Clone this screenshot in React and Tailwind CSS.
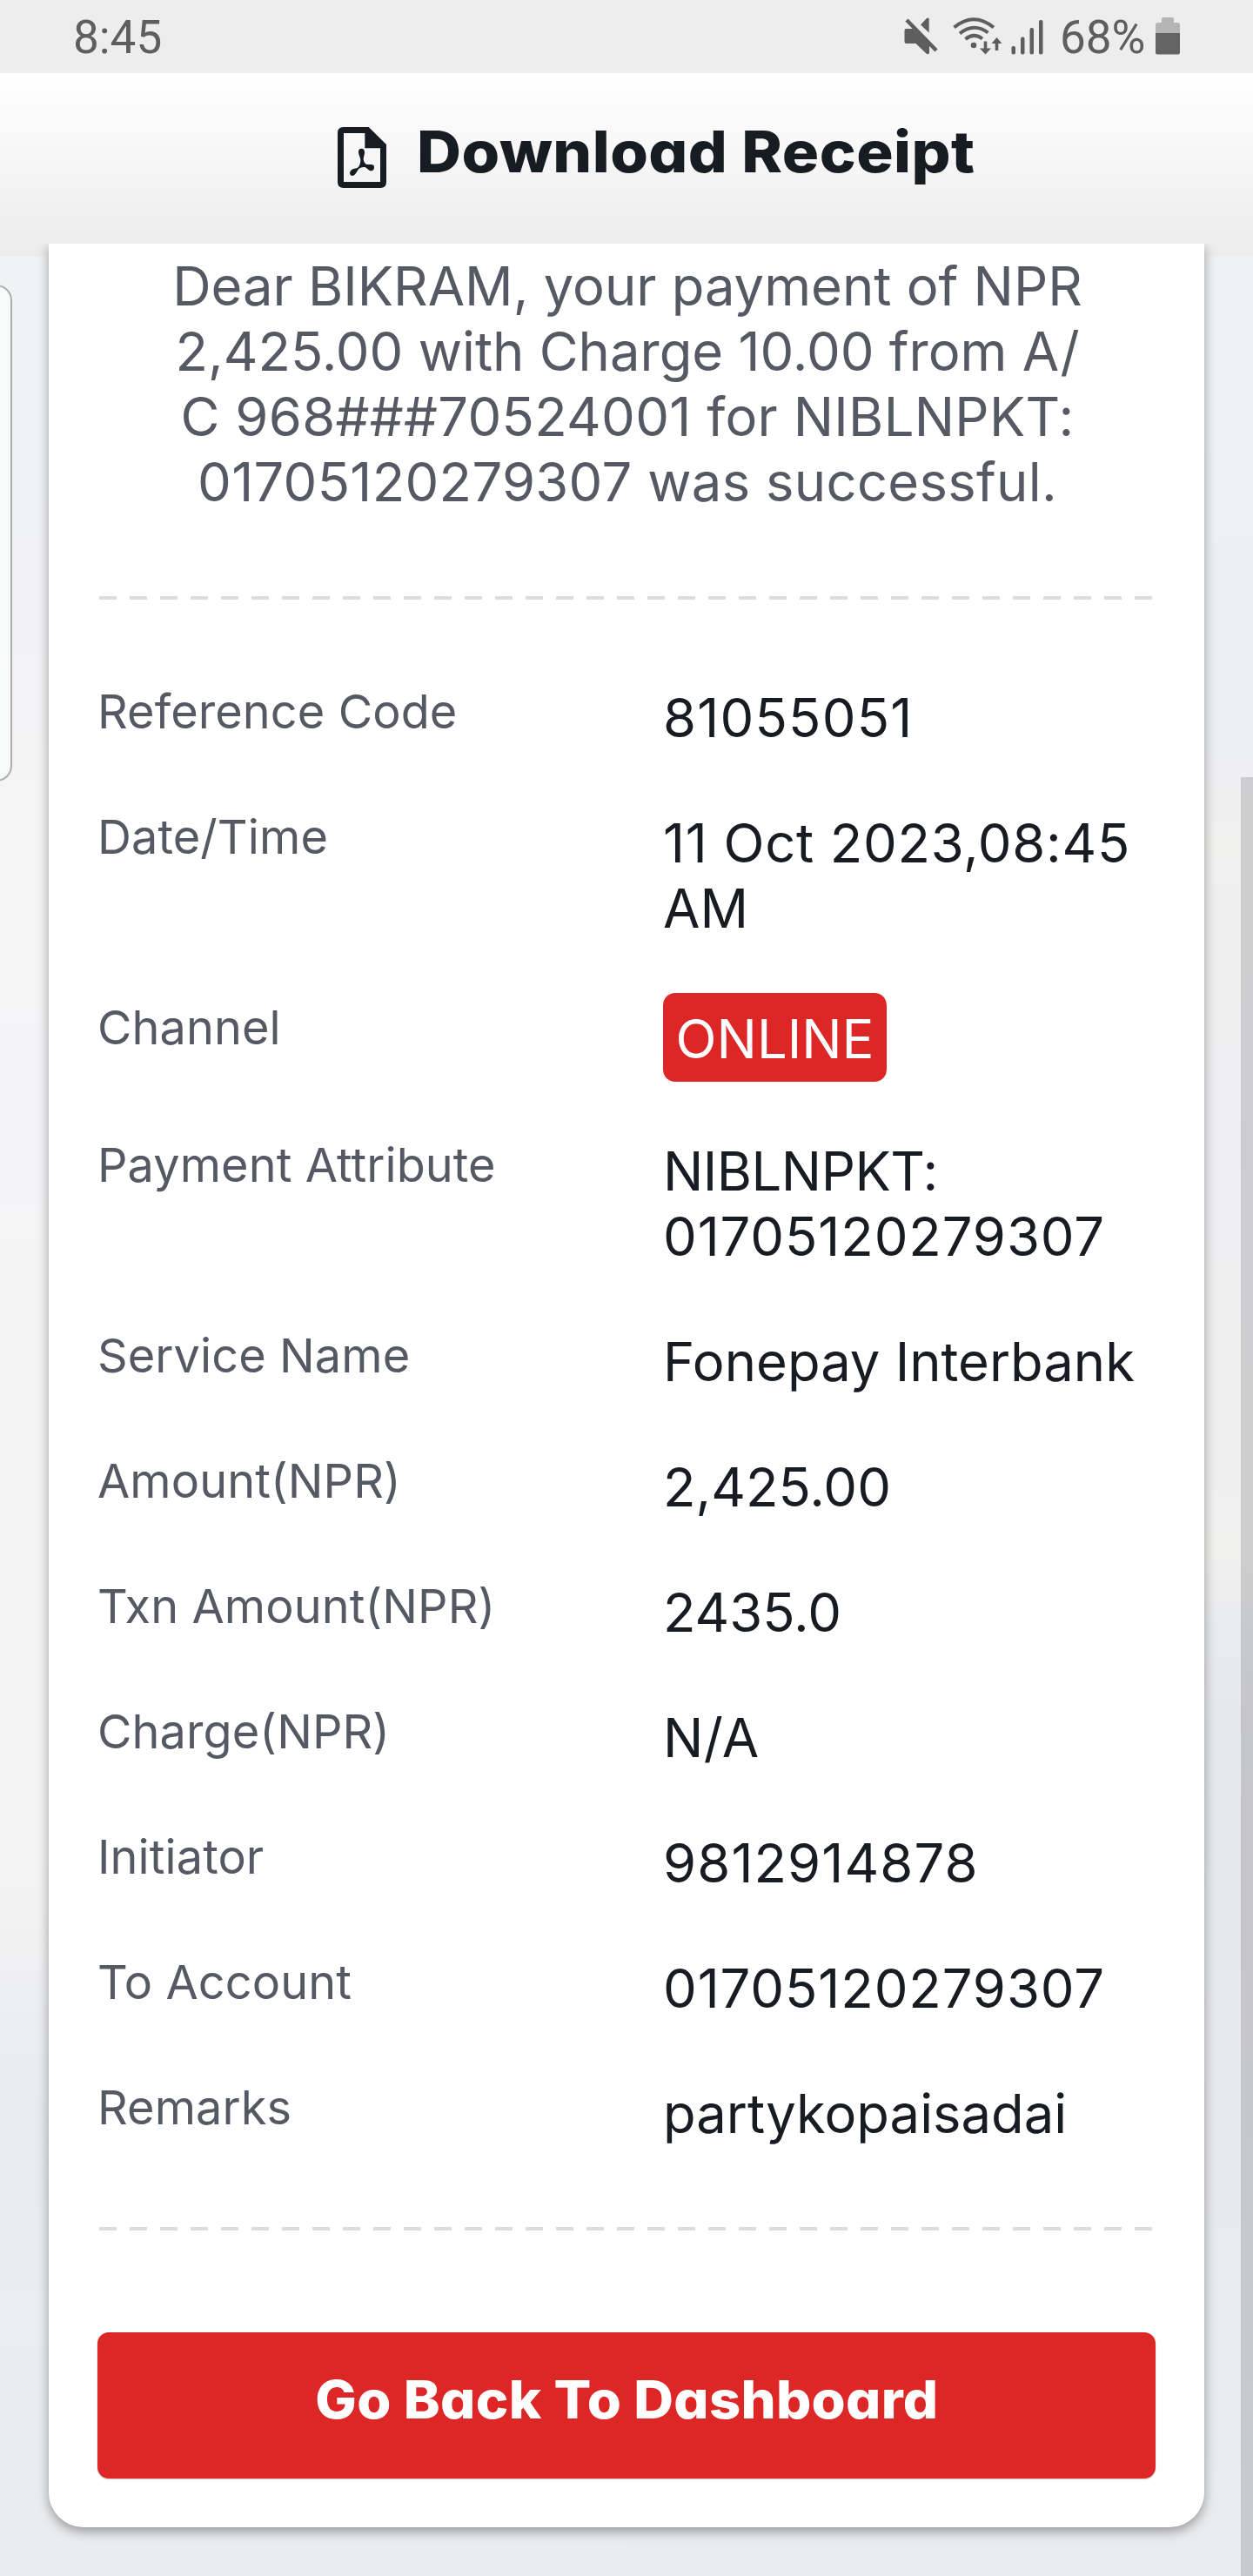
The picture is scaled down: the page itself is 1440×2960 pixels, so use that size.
const ROWS = [
  { label: 'Reference Code', lines: [['81055051', 'tracking-[1.2px]']] },
  { label: 'Date/Time', lines: [['11 Oct 2023,08:45', 'tracking-[0.7px]'], ['AM', 'tracking-normal']] },
  { label: 'Channel', badge: 'ONLINE' },
  { label: 'Payment Attribute', lines: [['NIBLNPKT:', 'tracking-[-0.5px]'], ['01705120279307', 'tracking-[0.9px]']] },
  { label: 'Service Name', lines: [['Fonepay Interbank', 'tracking-normal']] },
  { label: 'Amount(NPR)', lines: [['2,425.00', 'tracking-normal']] },
  { label: 'Txn Amount(NPR)', lines: [['2435.0', 'tracking-normal']] },
  { label: 'Charge(NPR)', lines: [['N/A', 'tracking-[0.4px]']] },
  { label: 'Initiator', lines: [['9812914878', 'tracking-[1.1px]']] },
  { label: 'To Account', lines: [['01705120279307', 'tracking-[0.9px]']] },
  { label: 'Remarks', lines: [['partykopaisadai', 'tracking-normal']] },
];

function StatusIcons() {
  return (
    <svg className="h-[84px] w-[168px]" viewBox="0 0 168 84" fill="#5e5e5e">
      {/* muted speaker */}
      <path d="M9.5 33H17L36 51.5V61q-1 2-3.500.5L20.500 50H9.500Q7.500 50 7.500 48V35Q7.500 33 9.500 33Z" />
      <path d="M26 28.500L33 21q2-1.300 2.700.8V37.500Z" />
      <path d="M10 23L44 58" stroke="#5e5e5e" strokeWidth="4.500" fill="none" />
      {/* wifi with traffic arrows */}
      <g fill="none" stroke="#5e5e5e" strokeWidth="4">
        <path d="M64.500 31.500Q87 13 110 31.500" />
        <path d="M71 38.500Q87 25.500 103.500 37.500" />
        <path d="M77.500 45Q87 37 97 44.500" />
      </g>
      <circle cx="87" cy="52" r="3.300" />
      <path d="M98.700 47.500h3.600v8h4.700l-6.500 7-6.500-7h4.700zM111.700 58h3.600v-8h4.200l-6-7-6 7h4.200z" />
      {/* signal bars */}
      <rect x="130.500" y="53" width="4.500" height="9.500" rx="2" />
      <rect x="141" y="42.500" width="4.500" height="20" rx="2" />
      <rect x="151.500" y="32" width="4.500" height="30.500" rx="2" />
      <rect x="162" y="23" width="4.500" height="39.500" rx="2" />
    </svg>
  );
}

function BatteryIcon() {
  return (
    <svg className="h-[84px] w-7" viewBox="0 0 28 84">
      <path d="M0 38V28.500Q0 26 2.500 26H7V21.500Q7 20 8.500 20H19.500Q21 20 21 21.500V26H25.500Q28 26 28 28.500V38Z" fill="#b5b5b5" />
      <path d="M0 38H28V60.500Q28 62.500 26 62.500H2Q0 62.500 0 60.500Z" fill="#636363" />
    </svg>
  );
}

function PdfIcon() {
  return (
    <svg className="h-[70px] w-14 shrink-0" viewBox="0 0 168 210" fill="#171b22">
      <path
        fillRule="evenodd"
        d="M20 0H107L168 60V190Q168 210 148 210H20Q0 210 0 190V20Q0 0 20 0ZM21 21V189H147V73H94V21Z"
      />
      <path d="M82 74C90 74 94 80 93 89C92 98 89 104 89 111C90 120 94 126 100 129C110 130 118 127 124 132C128 137 126 148 120 150C109 154 103 142 94 138C86 137 80 140 74 143C67 150 62 167 50 168C42 167 40 158 45 151C53 142 65 144 71 139C77 131 79 122 79 113C78 104 73 97 72 88C71 80 75 74 82 74Z" />
    </svg>
  );
}

function StatusBar() {
  return (
    <div className="flex h-[84px] items-start bg-[#ededed] pr-[84px] pl-[84px] font-['Roboto',sans-serif] text-[53px] leading-[87px] text-[#5e5e5e]">
      <span>8:45</span>
      <div className="ml-auto flex items-start">
        <StatusIcons />
        <span className="ml-[18px] w-[110px]">68%</span>
        <BatteryIcon />
      </div>
    </div>
  );
}

function DashedLine() {
  return (
    <div className="mx-[58px] h-1 w-[1210px] bg-[repeating-linear-gradient(90deg,#dbdcde_0_20px,transparent_20px_35px)]" />
  );
}

function Row({ label, lines, badge }) {
  return (
    <div className={badge ? 'flex h-[89px] items-start' : 'flex items-start'}>
      <dt className="-mt-[2px] w-[650px] shrink-0 text-[54px] leading-[65px] tracking-[0.1px] text-[#545963]">{label}</dt>
      {badge ? (
        <dd className="-mt-[9px] flex h-[102px] w-[257px] items-center justify-center rounded-[14px] bg-[#dd2726] pt-1 text-[61.5px] text-white">
          {badge}
        </dd>
      ) : (
        <dd className="w-[560px] text-[61.5px] leading-[75px] text-[#171b22]">
          {lines.map(([text, tracking]) => (
            <span key={text} className={`block whitespace-nowrap ${tracking}`}>
              {text}
            </span>
          ))}
        </dd>
      )}
    </div>
  );
}

export default function App() {
  return (
    <div className="h-[2960px] w-[1440px] overflow-hidden bg-[#f0f2f4] font-['Inter',sans-serif]">
      <StatusBar />
      <header className="flex h-[210px] items-start bg-linear-to-b from-white to-[#ececec] pt-[62px] pl-[388px]">
        <PdfIcon />
        <h1 className="-mt-[14px] ml-[35px] origin-left scale-x-107 text-[66px] leading-[84px] font-extrabold tracking-[0.45px] whitespace-nowrap text-[#171b22] [font-feature-settings:'cv11']">
          Download Receipt
        </h1>
      </header>

      <main className="relative -mt-[14px] h-[2680px] overflow-hidden">
        <div className="mt-[14px] h-[2666px] [background:linear-gradient(#f0f2f5,#f3f3f5_20%,#f5f5f5_24%,#f4f4f7_38%,#f5f4f4_46%,#f5f4f4_69%,#eeeff1_75%,#e9eaec_81%,#ecedef_88%,#ebecee)_left/50%_100%_no-repeat,linear-gradient(#eff1f4,#eeeff2_21%,#f0f0ef_25%,#efeff2_38%,#f0f0ef_56%,#eaebed_59%,#e6e7e9_64%,#e8e9eb_79%,#ebecee)_right/50%_100%_no-repeat]" />
        <div className="absolute top-[47px] -left-10 h-[571px] w-[54px] rounded-[18px] border-2 border-[#adafae] bg-[#f8f9f9]" />
        <div className="absolute top-[613px] right-0 h-[2067px] w-[14px] bg-[#1a1b20]/16" />

        <section className="absolute top-0 left-14 h-[2624px] w-[1328px] rounded-b-[40px] bg-white shadow-[0_5px_13px_rgba(0,0,0,0.36)]">
          <p className="pt-[11px] pl-[2px] text-center text-[61.5px] leading-[75px] text-[#545963]">
            Dear BIKRAM, your payment of NPR
            <br />
            2,425.00 with Charge 10.00 from A/
            <br />
            <span className="tracking-[0.3px]">C 968###70524001 for NIBLNPKT:</span>
            <br />
            <span className="tracking-[0.3px]">01705120279307 was successful.</span>
          </p>
          <div className="mt-[94px]">
            <DashedLine />
          </div>
          <dl className="mt-[98px] flex flex-col gap-[69px] pl-14">
            {ROWS.map((row) => (
              <Row key={row.label} {...row} />
            ))}
          </dl>
          <div className="mt-[93px]">
            <DashedLine />
          </div>
          <button className="mx-14 mt-[117px] flex h-[168px] w-[1216px] items-center justify-center rounded-[13px] bg-[#dd2726] pb-[15px] text-[60px] font-extrabold text-white shadow-[0_1px_2px_rgba(0,0,0,0.2)] [font-feature-settings:'cv11']">
            <span className="scale-x-[1.055] tracking-[0.25px] whitespace-nowrap">Go Back To Dashboard</span>
          </button>
        </section>
      </main>
    </div>
  );
}
